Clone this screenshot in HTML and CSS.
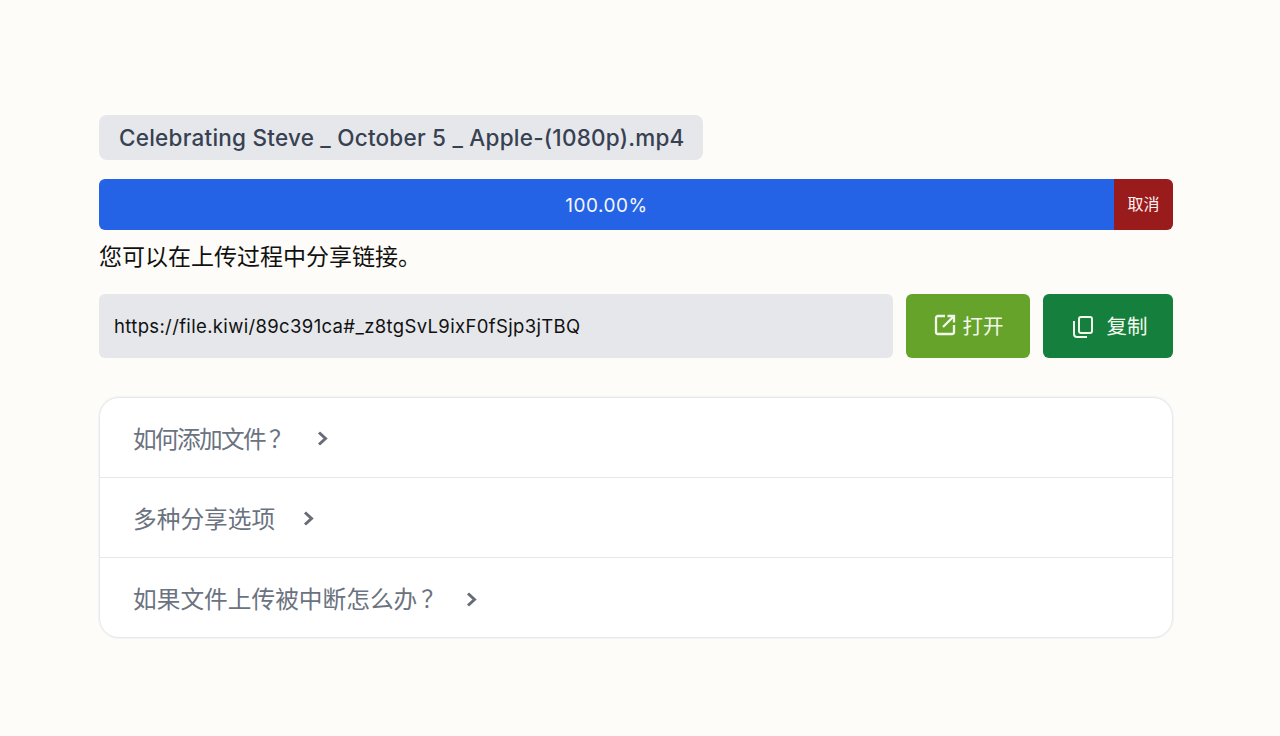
FILE: index.html
```html
<!DOCTYPE html>
<html lang="zh">
<head>
<meta charset="utf-8">
<title>file.kiwi</title>
<link rel="stylesheet" href="styles.css">
</head>
<body>
<main class="wrap">
  <div class="name-row"><span class="file-name">Celebrating Steve _ October 5 _ Apple-(1080p).mp4</span></div>
  <div class="progress">
    <div class="bar">100.00%</div>
    <button class="cancel">取消</button>
  </div>
  <p class="hint">您可以在上传过程中分享链接。</p>
  <div class="share">
    <div class="link">https://file.kiwi/89c391ca#_z8tgSvL9ixF0fSjp3jTBQ</div>
    <button class="btn open">
      <svg class="ico" viewBox="0 0 22 22" fill="none" stroke="currentColor" stroke-width="2.3"><path d="M11 2H4a2 2 0 0 0-2 2v14a2 2 0 0 0 2 2h14a2 2 0 0 0 2-2v-7"/><path d="M9 13 20 2M13.500 2H20v6.500"/></svg>
      <span>打开</span>
    </button>
    <button class="btn copy">
      <svg class="copy-ico" viewBox="0 0 20 22" fill="none" stroke="currentColor" stroke-width="2"><rect x="6" y="1" width="13" height="16" rx="2"/><path d="M1 5v13a3 3 0 0 0 3 3h10"/></svg>
      <span>复制</span>
    </button>
  </div>
  <section class="faq">
    <div class="faq-row"><span class="tight">如何添加文件<span class="qm">？</span></span><svg class="chev" viewBox="0 0 11 15" fill="none" stroke="currentColor" stroke-width="3"><path d="M2 1.500 8.500 7.500 2 13.500"/></svg></div>
    <div class="faq-row"><span>多种分享选项</span><svg class="chev" viewBox="0 0 11 15" fill="none" stroke="currentColor" stroke-width="3"><path d="M2 1.500 8.500 7.500 2 13.500"/></svg></div>
    <div class="faq-row"><span>如果文件上传被中断怎么办<span class="qm">？</span></span><svg class="chev" viewBox="0 0 11 15" fill="none" stroke="currentColor" stroke-width="3"><path d="M2 1.500 8.500 7.500 2 13.500"/></svg></div>
  </section>
</main>
</body>
</html>
```
FILE: styles.css
```css
* { box-sizing: border-box; }
html, body { margin: 0; height: 100%; }
body {
  background: #fdfcf8;
  font-family: Inter, "Noto Sans CJK SC", sans-serif;
  overflow: hidden;
}
.wrap {
  width: 1074px;
  margin-left: 99px;
  padding-top: 115px;
}
.name-row { display: flex; }
.file-name {
  display: block;
  height: 45px;
  line-height: 45px;
  padding: 0 18px 0 20px;
  background: #e5e7eb;
  border-radius: 8px;
  color: #374151;
  font-size: 22.5px;
  font-weight: 500;
  white-space: nowrap;
  letter-spacing: 0.23px;
}
.progress {
  display: flex;
  height: 51px;
  margin-top: 19px;
  border-radius: 6px;
  overflow: hidden;
}
.bar {
  flex: 1;
  padding-top: 2px;
  background: #2563e6;
  color: #f4f6fb;
  font-size: 19px;
  letter-spacing: 0.5px;
  line-height: 49px;
  text-align: center;
}
.cancel {
  width: 59px;
  border: 0;
  padding: 0 0 3px;
  background: #991b1b;
  color: #fdf2f2;
  font: 16px "Noto Sans CJK SC", sans-serif;
}
.hint {
  margin: 9px 0 0;
  height: 36px;
  line-height: 36px;
  font-size: 23px;
  color: #111;
}
.share {
  display: flex;
  gap: 13px;
  height: 64px;
  margin-top: 19px;
}
.link {
  flex: 1;
  background: #e5e7eb;
  border-radius: 6px;
  padding-left: 15px;
  line-height: 64px;
  font-size: 18.5px;
  letter-spacing: 0.35px;
  color: #111;
}
.btn {
  display: flex;
  align-items: center;
  justify-content: center;
  border: 0;
  border-radius: 6px;
  padding: 0 0 2px;
  color: #f3f8ec;
  font: 20.5px "Noto Sans CJK SC", sans-serif;
}
.open { width: 124px; background: #65a32b; gap: 7px; }
.copy { width: 130px; background: #15803d; gap: 14px; padding-left: 4px; }
.ico { width: 22px; height: 22px; margin-left: 1px; }
.copy-ico { width: 20px; height: 22px; margin-top: 4px; }
.faq {
  margin-top: 39px;
  height: 241px;
  background: #fff;
  border: 1px solid #e7e9ec;
  box-shadow: 0 0 0 1px #f3f4f3;
  border-radius: 20px;
  overflow: hidden;
}
.faq-row {
  display: flex;
  align-items: center;
  gap: 28px;
  height: 80px;
  padding-left: 33px;
  border-bottom: 1px solid #e5e7eb;
  color: #6b7280;
  font-family: "Noto Sans CJK JP", sans-serif;
  font-size: 23.7px;
  white-space: nowrap;
}
.faq-row:last-child { border-bottom: 0; }
.tight { letter-spacing: -1.7px; margin-right: 5px; }
.qm { margin-left: 4px; margin-right: -7px; }
.chev { width: 11px; height: 15px; margin-top: 2px; color: #666d77; }
```
